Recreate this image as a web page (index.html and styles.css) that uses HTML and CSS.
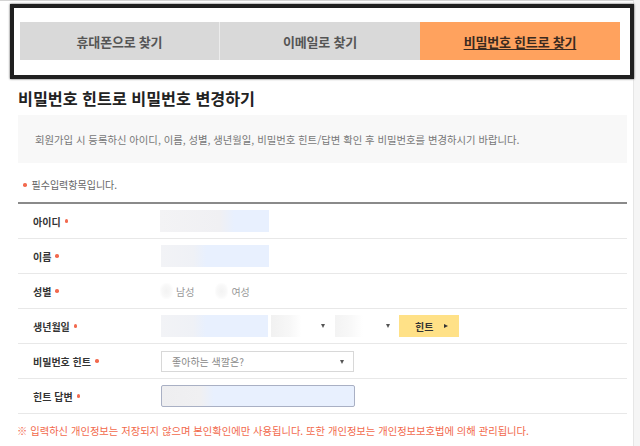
FILE: index.html
```html
<!DOCTYPE html>
<html lang="ko">
<head>
<meta charset="utf-8">
<title>비밀번호 힌트로 비밀번호 변경하기</title>
<link rel="stylesheet" href="styles.css">
</head>
<body>
<div class="page">
  <div class="frame">
    <div class="tabs">
      <div class="tab">휴대폰으로 찾기</div>
      <div class="tab tab-mid">이메일로 찾기</div>
      <div class="tab tab-on"><span>비밀번호 힌트로 찾기</span></div>
    </div>
  </div>

  <div class="content">
    <h1 class="title">비밀번호 힌트로 비밀번호 변경하기</h1>
    <div class="info">회원가입 시 등록하신 아이디, 이름, 성별, 생년월일, 비밀번호 힌트/답변 확인 후 비밀번호를 변경하시기 바랍니다.</div>
    <div class="req"><span class="dot"></span>필수입력항목입니다.</div>

    <div class="form">
      <div class="row">
        <div class="label">아이디<span class="dot"></span></div>
        <div class="field"><span class="input w109 blur-long"></span></div>
      </div>
      <div class="row">
        <div class="label">이름<span class="dot"></span></div>
        <div class="field"><span class="input w108 blur-short"></span></div>
      </div>
      <div class="row">
        <div class="label">성별<span class="dot"></span></div>
        <div class="field gender">
          <span class="radio"></span><span class="opt">남성</span>
          <span class="radio r2"></span><span class="opt">여성</span>
        </div>
      </div>
      <div class="row">
        <div class="label">생년월일<span class="dot"></span></div>
        <div class="field birth">
          <span class="input w107 blur-short"></span>
          <span class="select sel-month"><span class="arrow"></span></span>
          <span class="select sel-day"><span class="arrow"></span></span>
          <span class="hint-btn">힌트<span class="tri"></span></span>
        </div>
      </div>
      <div class="row">
        <div class="label">비밀번호 힌트<span class="dot"></span></div>
        <div class="field"><span class="select sel-hint">좋아하는 색깔은?<span class="arrow"></span></span></div>
      </div>
      <div class="row">
        <div class="label">힌트 답변<span class="dot"></span></div>
        <div class="field"><span class="input answer"></span></div>
      </div>
    </div>

    <p class="notice">※ 입력하신 개인정보는 저장되지 않으며 본인확인에만 사용됩니다. 또한 개인정보는 개인정보보호법에 의해 관리됩니다.</p>
  </div>
</div>
</body>
</html>
```
FILE: styles.css
```css
* { box-sizing: border-box; }
html, body {
  margin: 0;
  padding: 0;
}
body {
  background: #f5f5f5;
  font-family: "Noto Sans CJK KR", "Noto Sans", sans-serif;
  color: #333;
  width: 640px;
  height: 446px;
  overflow: hidden;
}
.page {
  width: 634px;
  height: 446px;
  background: #fff;
  border-top: 1px solid #d4d4d4;
  border-right: 1px solid #e6e6e6;
  padding-top: 3px;
}
.frame {
  margin-left: 10px;
  width: 624px;
  height: 75px;
  border: 4px solid #202020;
  box-shadow: 0 0 2px rgba(0,0,0,0.7);
  padding: 14px 10px 15px 6px;
}
.tabs {
  display: grid;
  grid-template-columns: 199px 201px 200px;
  height: 38px;
}
.tab {
  background: #d9d9d9;
  color: #555;
  font-size: 13px;
  font-weight: bold;
  display: flex;
  align-items: center;
  justify-content: center;
  letter-spacing: -0.2px;
}
.tab-mid { border-left: 1px solid #ececec; }
.tab-on {
  background: #ffa25e;
  color: #3a2a20;
}
.tab-on span { text-decoration: underline; text-underline-offset: 2px; }

.content {
  margin-left: 18px;
  width: 609px;
}
.title {
  margin: 9px 0 0 0;
  font-size: 16.2px;
  line-height: 20px;
  font-weight: bold;
  color: #222;
}
.info {
  margin-top: 7px;
  height: 48px;
  background: #f8f8f8;
  padding-left: 17px;
  display: flex;
  align-items: center;
  font-size: 10.35px;
  color: #777;
}
.req {
  margin-top: 15px;
  padding-left: 5px;
  font-size: 10px;
  line-height: 14px;
  color: #666;
  display: flex;
  align-items: center;
}
.req .dot { margin: 0 5px 0 0; }
.dot {
  display: inline-block;
  width: 3.5px;
  height: 3.5px;
  border-radius: 50%;
  background: #f26a4f;
  margin-left: 4px;
}
.form {
  margin-top: 10px;
  border-top: 2px solid #8a8a8a;
}
.row {
  display: flex;
  align-items: center;
  height: 35px;
  border-bottom: 1px solid #e8e8e8;
}
.label {
  width: 142px;
  padding-left: 15px;
  font-size: 10px;
  font-weight: bold;
  color: #333;
  display: flex;
  align-items: center;
}
.field {
  display: flex;
  align-items: center;
}
.input {
  display: block;
  height: 22px;
  background: #e8f0fe;
}
.w109 { width: 109px; }
.w108 { width: 108px; margin-left: 1px; }
.w107 { width: 107px; margin-left: 1px; }
.blur-long {
  background: linear-gradient(to right, #f3f3f5 0, #f0f0f3 55%, #e8f0fe 68%);
}
.blur-short {
  background: linear-gradient(to right, #f2f3f6 0, #eff1f6 30%, #e8f0fe 42%);
}
.gender .opt {
  font-size: 10px;
  color: #999;
  margin-left: 3px;
}
.radio {
  display: block;
  width: 13px;
  height: 16px;
  background: radial-gradient(ellipse at center, #f3f3f3 0, #f8f8f8 50%, #fff 80%);
}
.r2 { margin-left: 21px; }
.birth { height: 22px; }
.select {
  position: relative;
  display: flex;
  align-items: center;
  height: 22px;
  background: #fff;
}
.sel-month {
  width: 61px;
  margin-left: 3px;
  background: linear-gradient(to right, #f1f1f1 0, #f7f7f7 30%, #fff 50%);
}
.sel-day {
  width: 62px;
  margin-left: 3px;
  background: linear-gradient(to right, #f3f3f3 0, #f8f8f8 25%, #fff 45%);
}
.arrow {
  position: absolute;
  right: 7px;
  top: 9px;
  width: 0;
  height: 0;
  border-left: 2.5px solid transparent;
  border-right: 2.5px solid transparent;
  border-top: 4px solid #555;
}
.hint-btn {
  margin-left: 2px;
  width: 60px;
  height: 22px;
  background: #ffe187;
  font-size: 10px;
  font-weight: bold;
  color: #333;
  display: flex;
  align-items: center;
  padding-left: 16px;
}
.tri {
  display: inline-block;
  margin-left: 11px;
  width: 0;
  height: 0;
  border-top: 2.5px solid transparent;
  border-bottom: 2.5px solid transparent;
  border-left: 4px solid #333;
}
.sel-hint {
  width: 193px;
  height: 21px;
  margin-left: 1px;
  border: 1px solid #d8d8d8;
  padding-left: 10px;
  font-size: 10px;
  color: #888;
}
.sel-hint .arrow { right: 9px; top: 8px; }
.answer {
  width: 194px;
  margin-left: 1px;
  border: 1px solid #a9b0c4;
  border-radius: 2px;
  background: linear-gradient(to right, #eeeef0 0, #f0f0f2 20%, #e8f0fe 27%);
}
.notice {
  margin: 10px 0 0 -1px;
  font-size: 10.3px;
  line-height: 14px;
  color: #f2694c;
}
```
